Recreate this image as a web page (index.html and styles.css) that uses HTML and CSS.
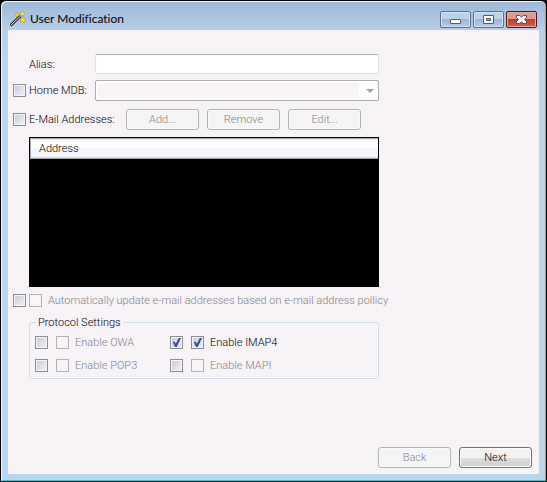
FILE: index.html
```html
<!DOCTYPE html>
<html lang="en">
<head>
<meta charset="utf-8">
<title>User Modification</title>
<link rel="stylesheet" href="styles.css">
</head>
<body>
<div class="window">
  <header class="titlebar">
    <svg class="wand" width="16" height="16" viewBox="0 0 16 16" aria-hidden="true">
      <path d="M.5 14.500 10.500 5" stroke="#2c2c30" stroke-width="3"/>
      <path d="M1 14 10.500 5" stroke="#dcdee0" stroke-width="1"/>
      <path d="M7.500 1 8.500 2.500 9.500 4 8 4.800 7 6 6 5 5 3.500 6.500 2.800z" fill="#e8d332" stroke="#a3922a" stroke-width=".5"/>
      <path d="M13 5.500 14.200 7.500 16 8 15 9.500 14.500 11.500 12.500 10.800 10.200 11 10.800 9 10 7.500 12 7.200z" fill="#f0dc3c" stroke="#a3922a" stroke-width=".5"/>
      <path d="M12 0 13.200 1.500 15 2 13.800 3.500 13 5 11.800 3.800 10 3 11.200 1.700z" fill="#f5e84a" stroke="#a3922a" stroke-width=".5"/>
    </svg>
    <h1 class="title">User Modification</h1>
    <div class="controls">
      <button class="control" type="button" aria-label="Minimize">
        <svg width="11" height="11" viewBox="0 0 11 11"><rect x=".5" y="5.500" width="10" height="4" rx=".5" fill="#fff" stroke="#535b68"/></svg>
      </button>
      <button class="control" type="button" aria-label="Maximize">
        <svg width="11" height="11" viewBox="0 0 11 11"><path d="M.5 1.500h10v8H.5zM3.500 4.500v2h4v-2z" fill="#fff" fill-rule="evenodd" stroke="#535b68"/></svg>
      </button>
      <button class="control control-close" type="button" aria-label="Close">
        <svg width="13" height="11" viewBox="0 0 13 11"><path d="M1.500 1.500h3L6.500 3l2-1.500h3v2L9.500 5.500l2 2v2h-3l-2-1.500-2 1.500h-3v-2l2-2-2-2z" fill="#fff" stroke="#5c4a50"/></svg>
      </button>
    </div>
  </header>
  <main class="client">
    <form class="form">
      <div class="row">
        <label class="name indent" for="alias">Alias:</label>
        <input class="field" id="alias" type="text">
      </div>
      <div class="row row-combo">
        <label class="name"><input class="check" type="checkbox">Home MDB:</label>
        <span class="combo"><select class="field-combo" aria-label="Home MDB" disabled><option></option></select></span>
      </div>
      <div class="row row-mail">
        <label class="name name-wide"><input class="check" type="checkbox">E-Mail Addresses:</label>
        <div class="actions">
          <button class="button" type="button" disabled>Add...</button>
          <button class="button" type="button" disabled>Remove</button>
          <button class="button" type="button" disabled>Edit...</button>
        </div>
      </div>
      <div class="list">
        <table class="table"><thead><tr><th scope="col">Address</th></tr></thead></table>
      </div>
      <div class="auto">
        <input class="check" type="checkbox" aria-label="Modify automatic update">
        <label class="option"><input class="check" type="checkbox" disabled><span>Automatically update e-mail addresses based on e-mail address pollicy</span></label>
      </div>
      <fieldset class="group">
        <legend>Protocol Settings</legend>
        <div class="protocols">
          <div class="protocol"><input class="check" type="checkbox" aria-label="Modify OWA"><label class="option"><input class="check" type="checkbox" disabled><span>Enable OWA</span></label></div>
          <div class="protocol"><input class="check" type="checkbox" aria-label="Modify IMAP4" checked><label class="option"><input class="check" type="checkbox" checked><span>Enable IMAP4</span></label></div>
          <div class="protocol"><input class="check" type="checkbox" aria-label="Modify POP3"><label class="option"><input class="check" type="checkbox" disabled><span>Enable POP3</span></label></div>
          <div class="protocol"><input class="check" type="checkbox" aria-label="Modify MAPI"><label class="option"><input class="check" type="checkbox" disabled><span>Enable MAPI</span></label></div>
        </div>
      </fieldset>
    </form>
    <footer class="footer">
      <button class="button" type="button" disabled>Back</button>
      <button class="button" type="button">Next</button>
    </footer>
  </main>
</div>
</body>
</html>
```
FILE: styles.css
```css
* { box-sizing: border-box; }

body {
  margin: 0;
  background: #000;
  color: #000;
  font: 300 11px/15px Roboto, "Liberation Sans", sans-serif;
}

button, input, select { font: inherit; color: inherit; margin: 0; }

.window {
  display: flex;
  flex-direction: column;
  min-height: 100vh;
  padding: 1px 7px 7px;
  border: 1px solid #000;
  border-radius: 6px 6px 0 0;
  background: linear-gradient(#9db7d8, #b7cfea 29px, #bdd3ef 60px);
  box-shadow: inset 1px 1px #f4f8fc, inset -1px -1px #25cbe9;
}

.titlebar {
  display: flex;
  align-items: center;
  gap: 4px;
  height: 28px;
  padding: 6px 2px 0;
}

.title {
  flex: 1;
  margin: 0;
  font: 12px/16px Lato, sans-serif;
  font-variant-ligatures: none;
}

.controls { display: flex; gap: 2px; }

.control {
  display: flex;
  align-items: center;
  justify-content: center;
  width: 31px;
  height: 17px;
  padding: 0;
  border: 1px solid #586d91;
  border-radius: 2px;
  background: linear-gradient(#bdd1e9 50%, #9bb5d5 50%, #b4cce8);
  box-shadow: inset 0 0 0 1px #d0e1f4;
}

.control-close {
  border-color: #4c1620;
  background: linear-gradient(#dd9a90 45%, #bd3b28 50%, #d2654d);
  box-shadow: inset 0 0 0 1px #e5aaa2;
}

.client {
  flex: 1;
  display: flex;
  flex-direction: column;
  justify-content: space-between;
  padding: 24px 7px 6px 5px;
  background: #f7f3f7;
}

.form { max-width: 366px; }

.row { display: flex; align-items: center; }
.row-combo { margin-top: 6px; }
.row-mail { margin-top: 8px; }

.name { display: flex; align-items: center; gap: 3px; width: 82px; white-space: nowrap; }
.name-wide { width: 113px; }
.indent { padding-left: 16px; }

.field {
  flex: 1;
  min-width: 0;
  height: 20px;
  padding: 0 4px;
  border: 1px solid #dfe0e9;
  border-top-color: #abadb3;
  border-radius: 2px;
  background: #fff;
}

.combo { position: relative; flex: 1; display: flex; }

.combo::after {
  content: "";
  position: absolute;
  top: 9px;
  right: 5px;
  border: 4px solid transparent;
  border-top-color: #a5a3a6;
  border-bottom: 0;
}

.field-combo {
  appearance: none;
  width: 100%;
  height: 21px;
  padding: 0;
  border: 1px solid #abadb0;
  border-radius: 2px;
  background: #f7f3f7;
  box-shadow: inset 0 0 0 2px #fff, inset -19px 0 #fff;
  opacity: 1;
}

.actions, .footer { display: flex; gap: 8px; }
.footer { justify-content: flex-end; }

.button {
  width: 73px;
  height: 21px;
  padding: 0;
  border: 1px solid #707070;
  border-radius: 3px;
  background: linear-gradient(#f4f3f4 50%, #dedede 50%, #d1d0d1);
  box-shadow: inset 0 0 0 1px #fbfbfb;
}

.button:disabled {
  border-color: #b0b3b5;
  background: #f6f5f6;
  color: #858287;
}

.list {
  min-height: 150px;
  margin: 7px 0 0 16px;
  padding: 1px;
  background: #000;
}

.table { width: 100%; border-collapse: collapse; }

.table th {
  height: 20px;
  padding: 0 8px;
  border: 1px solid #a6a8ac;
  border-width: 1px 0 1px 1px;
  background: linear-gradient(#fff 45%, #f5f6fc 50%, #f5f6fc 90%, #d5d5d9 95%);
  font-weight: inherit;
  text-align: left;
}

.check {
  appearance: none;
  flex: none;
  display: block;
  width: 13px;
  height: 13px;
  padding: 1px;
  border: 1px solid #8a8c8d;
  background: linear-gradient(135deg, #c5cbd3, #f2f3f5);
  background-clip: content-box;
  box-shadow: inset 0 0 0 1px #f5f5f5;
}

.check:disabled {
  border-color: #b5b2b5;
  background: #f8f5f8;
}

.check:checked::before {
  content: "";
  display: block;
  width: 9px;
  height: 9px;
  background: #344c99;
  clip-path: polygon(8% 42%, 30% 42%, 43% 65%, 75% 0, 100% 0, 52% 100%, 34% 100%);
}

.auto { display: flex; align-items: center; gap: 3px; margin-top: 6px; }
.option { display: flex; align-items: center; gap: 6px; white-space: nowrap; }
.check:disabled + span { color: #858287; }

.group {
  min-width: 0;
  margin: 7px 0 0 16px;
  padding: 5px;
  border: 1px solid #d1dde9;
  border-radius: 3px;
  box-shadow: inset -1px -1px #fff;
}

.group legend { margin-left: 1px; padding: 0 2px; }

.protocols {
  display: grid;
  grid-template-columns: 135px 1fr;
  gap: 8px 0;
}

.protocol { display: flex; align-items: center; gap: 8px; }
```
